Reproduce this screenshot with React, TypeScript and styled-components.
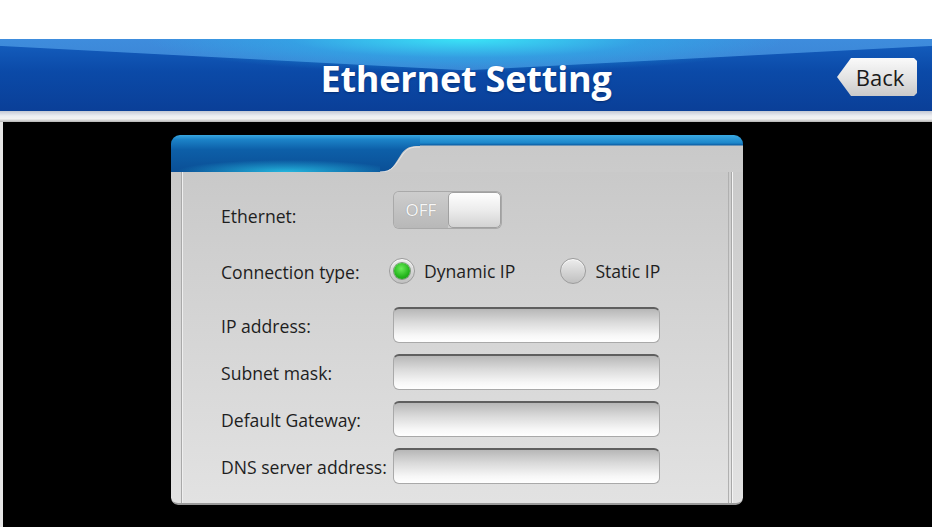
import React, { useState } from "react";
import styled, { createGlobalStyle } from "styled-components";

const GlobalStyle = createGlobalStyle`
  html, body {
    margin: 0;
    padding: 0;
    background: #ffffff;
    overflow: hidden;
  }
  body {
    font-family: "Open Sans", "DejaVu Sans", sans-serif;
  }
`;

const Page = styled.div`
  width: 932px;
  height: 527px;
  display: flex;
  flex-direction: column;
`;

const TopGap = styled.div`
  height: 39px;
  background: #ffffff;
`;

const Header = styled.header`
  height: 72px;
  box-sizing: border-box;
  padding-top: 6px;
  display: flex;
  align-items: center;
  justify-content: center;
  position: relative;
  background:
    radial-gradient(ellipse 320px 34px at 50% 0%, rgba(58, 232, 248, 0.95), rgba(40, 190, 240, 0.4) 55%, transparent 100%),
    linear-gradient(183deg, rgba(90, 170, 240, 0.6) 0 32%, transparent 33%) left top / 50% 100% no-repeat,
    linear-gradient(177deg, rgba(90, 170, 240, 0.6) 0 32%, transparent 33%) right top / 50% 100% no-repeat,
    linear-gradient(#1560c0, #0b4aa8 45%, #0a3f98);
`;

const Title = styled.h1`
  margin: 0;
  color: #ffffff;
  font-family: "Open Sans", "DejaVu Sans", sans-serif;
  font-weight: 700;
  font-size: 36px;
  letter-spacing: -0.2px;
  text-shadow: 0 1px 2px rgba(0, 30, 80, 0.6);
`;

const BackButton = styled.button`
  position: absolute;
  right: 15px;
  top: 19px;
  width: 80px;
  height: 38px;
  border: none;
  padding: 0 0 0 6px;
  font-family: "Open Sans", "DejaVu Sans", sans-serif;
  font-size: 22px;
  color: #1a1a1a;
  background: linear-gradient(#fafafa, #e2e2e2 55%, #c9c9c9);
  clip-path: polygon(0 50%, 14px 0, calc(100% - 3px) 0, 100% 3px, 100% calc(100% - 3px), calc(100% - 3px) 100%, 14px 100%);
  cursor: pointer;
`;

const Strip = styled.div`
  height: 11px;
  background: linear-gradient(#c3c8d4, #eceef2 45%, #f2f2f2 70%, #b5b5b5);
`;

const Main = styled.main`
  flex: 1;
  background: #000000;
  border-left: 3px solid #e6e6e6;
  padding: 13px 0 0 168px;
`;

const Panel = styled.section`
  width: 572px;
  height: 370px;
  display: flex;
  flex-direction: column;
  border-radius: 9px 9px 7px 7px;
  overflow: hidden;
`;

const PanelHead = styled.div`
  height: 37px;
  display: flex;
`;

const Tab = styled.div`
  width: 209px;
  background:
    radial-gradient(ellipse 110px 12px at 55% 100%, rgba(40, 200, 235, 0.85), transparent),
    linear-gradient(#38a6e0 0, #1c83c8 12%, #0d5fa8 40%, #0a4f96);
`;

const HeadRest = styled.div`
  flex: 1;
  background: linear-gradient(#3aa9e2, #1c86ca 8px, #0c5ea4 10px, #c9c9c9 11px, #cbcbcb);
`;

const Bend = styled.svg`
  width: 40px;
  height: 37px;
  display: block;
  flex: none;
`;

const PanelBody = styled.div`
  flex: 1;
  padding: 19px 0 0 50px;
  border-bottom: 2px solid #9a9a9a;
  border-radius: 0 0 7px 7px;
  background:
    linear-gradient(to right, transparent 10px, #a9a9a9 10px, #a9a9a9 11px, #efefef 11px, #efefef 12px, transparent 12px) left top / 100% 100% no-repeat,
    linear-gradient(to left, transparent 10px, #f4f4f4 10px, #f4f4f4 11px, #a8a8a8 11px, #a8a8a8 12px, transparent 12px, transparent 14px, #b0b0b0 14px, #b0b0b0 15px, transparent 15px) left top / 100% 100% no-repeat,
    linear-gradient(#c9c9c9, #d3d3d3 40%, #e2e2e2);
`;

const Form = styled.div`
  display: flex;
  flex-direction: column;
`;

const Row = styled.div<{ $height: number; $top: number }>`
  display: grid;
  grid-template-columns: 172px 267px;
  align-items: center;
  height: ${(p) => p.$height}px;
  margin-top: ${(p) => p.$top}px;
`;

const Label = styled.span<{ $shift?: number }>`
  font-size: 17.6px;
  color: #1e1e1e;
  margin-top: ${(p) => p.$shift ?? 0}px;
`;

const Switch = styled.div`
  margin-left: 1px;
  width: 107px;
  height: 36px;
  display: flex;
  border-radius: 5px;
  overflow: hidden;
  box-shadow: 0 0 0 1px #a9a9a9;
`;

const SwitchOff = styled.span`
  width: 54px;
  display: flex;
  align-items: center;
  justify-content: center;
  color: #f7f7f7;
  font-size: 17px;
  background: linear-gradient(#cdcdcd, #b8b8b8);
  text-shadow: 0 0 1px rgba(0, 0, 0, 0.3);
`;

const Knob = styled.span`
  flex: 1;
  border-radius: 5px;
  border: 1px solid #a0a0a0;
  background: linear-gradient(#fefefe, #ececec 50%, #d3d3d3);
`;

const RadioRow = styled.div`
  margin-left: -4px;
  display: flex;
  align-items: center;
  gap: 45px;
  width: 300px;
`;

const RadioOption = styled.label`
  display: flex;
  align-items: center;
  gap: 9px;
  font-size: 17.6px;
  color: #1e1e1e;
  cursor: pointer;
`;

const RadioDot = styled.span<{ $on: boolean }>`
  width: 26px;
  height: 26px;
  border-radius: 50%;
  box-sizing: border-box;
  display: flex;
  align-items: center;
  justify-content: center;
  border: 1px solid #9c9c9c;
  background: linear-gradient(#ededed, #d6d6d6 50%, #c0c0c0);
  box-shadow: inset 0 1px 1px rgba(255, 255, 255, 0.8);

  &::after {
    content: "";
    display: ${(p) => (p.$on ? "block" : "none")};
    width: 16px;
    height: 16px;
    border-radius: 50%;
    background: radial-gradient(circle at 45% 35%, #6cec5a, #24b51d 60%, #138c12);
    box-shadow: 0 0 0 1px #7a9a78;
  }
`;

const Field = styled.input`
  width: 267px;
  height: 36px;
  box-sizing: border-box;
  border: 1px solid #a9a9a9;
  border-top: 2px solid #5f5f5f;
  border-radius: 6px;
  padding: 0 8px;
  font-family: "Open Sans", "DejaVu Sans", sans-serif;
  font-size: 16px;
  outline: none;
  background: linear-gradient(#b7b7b7, #dadada 40%, #f7f7f7 80%, #ffffff);
`;

const fields = ["IP address:", "Subnet mask:", "Default Gateway:", "DNS server address:"];

export default function App() {
  const [mode, setMode] = useState<"dynamic" | "static">("dynamic");

  return (
    <Page>
      <GlobalStyle />
      <TopGap />
      <Header>
        <Title>Ethernet Setting</Title>
        <BackButton>Back</BackButton>
      </Header>
      <Strip />
      <Main>
        <Panel>
          <PanelHead>
            <Tab />
            <Bend viewBox="0 0 40 37" preserveAspectRatio="none">
              <defs>
                <linearGradient id="bendBlue" x1="0" y1="0" x2="0" y2="1">
                  <stop offset="0" stopColor="#38a6e0" />
                  <stop offset="0.12" stopColor="#1c83c8" />
                  <stop offset="0.4" stopColor="#0d5fa8" />
                  <stop offset="1" stopColor="#0a4f96" />
                </linearGradient>
              </defs>
              <rect width="40" height="37" fill="#cacaca" />
              <path d="M0 0 H40 V11 C30 11 27 12 22 18 C14 30 12 37 0 37 Z" fill="url(#bendBlue)" />
              <path d="M40 12 C31 12 28 13 23 19 C15 31 12 37 0 37" fill="none" stroke="#e4e4e4" strokeWidth="1" />
            </Bend>
            <HeadRest />
          </PanelHead>
          <PanelBody>
            <Form>
              <Row $height={36} $top={0}>
                <Label $shift={13}>Ethernet:</Label>
                <Switch>
                  <SwitchOff>OFF</SwitchOff>
                  <Knob />
                </Switch>
              </Row>

              <Row $height={30} $top={29}>
                <Label $shift={1}>Connection type:</Label>
                <RadioRow>
                  <RadioOption onClick={() => setMode("dynamic")}>
                    <RadioDot $on={mode === "dynamic"} />
                    Dynamic IP
                  </RadioOption>
                  <RadioOption onClick={() => setMode("static")}>
                    <RadioDot $on={mode === "static"} />
                    Static IP
                  </RadioOption>
                </RadioRow>
              </Row>

              {fields.map((f, i) => (
                <Row key={f} $height={36} $top={i === 0 ? 21 : 11}>
                  <Label $shift={1}>{f}</Label>
                  <Field />
                </Row>
              ))}
            </Form>
          </PanelBody>
        </Panel>
      </Main>
    </Page>
  );
}
